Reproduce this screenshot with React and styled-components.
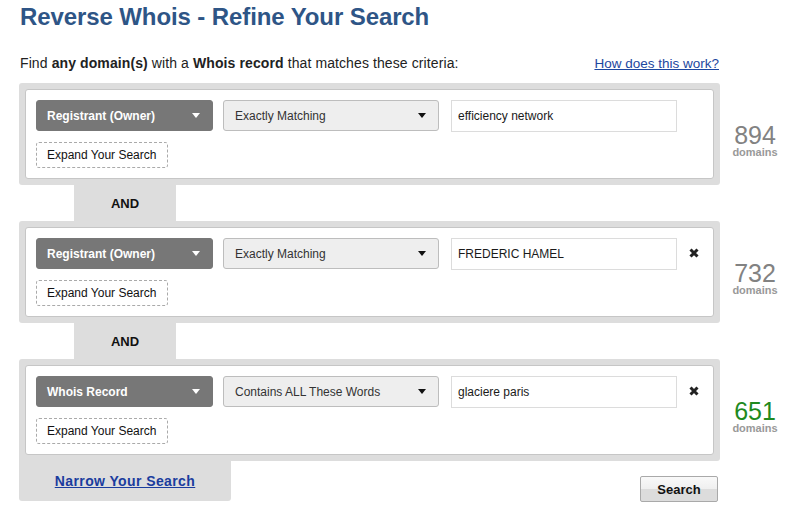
import React from "react";
import styled, { createGlobalStyle } from "styled-components";

const Global = createGlobalStyle`
  html, body { margin: 0; padding: 0; background: #fff; }
  body { font-family: "Liberation Sans", Arial, sans-serif; color: #222; }
  * { box-sizing: border-box; }
`;

const Page = styled.div`
  padding: 4px 0 0 19px;
  width: 790px;
`;

const Title = styled.h1`
  margin: 0 0 0 1px;
  font-size: 24px;
  line-height: 26px;
  letter-spacing: -0.1px;
  font-weight: bold;
  color: #2e5586;
`;

const IntroRow = styled.div`
  display: flex;
  justify-content: space-between;
  align-items: baseline;
  width: 699px;
  margin: 25px 0 11px 1px;
  font-size: 14px;
  line-height: 17px;
  letter-spacing: 0.1px;
  color: #222;
`;

const HelpLink = styled.a`
  color: #1d47a0;
  text-decoration: underline;
  letter-spacing: 0;
  font-size: 13.5px;
  cursor: pointer;
`;

const Row = styled.div`
  display: flex;
  align-items: flex-start;
`;

const Block = styled.div`
  width: 701px;
  display: flex;
  flex-direction: column;
`;

const Panel = styled.div`
  background: #dddddd;
  border-radius: ${(p) => (p.$flatBottomLeft ? "3px 3px 3px 0" : "3px")};
  padding: 6px;
  height: 102px;
`;

const Inner = styled.div`
  background: #fff;
  border: 1px solid #c6c6c6;
  border-radius: 3px;
  padding: 10px;
  height: 100%;
  display: flex;
  flex-direction: column;
  gap: 10px;
`;

const Fields = styled.div`
  display: flex;
  align-items: flex-start;
`;

const SelectBox = styled.div`
  display: flex;
  align-items: center;
  justify-content: space-between;
  height: 31px;
  width: ${(p) => p.$w}px;
  margin-right: ${(p) => p.$mr}px;
  padding: 0 12px 0 ${(p) => (p.$dark ? 10 : 11)}px;
  border-radius: 3px;
  font-size: 12px;
  background: ${(p) => (p.$dark ? "#777777" : "#eeeeee")};
  border: 1px solid ${(p) => (p.$dark ? "#777777" : "#bdbdbd")};
  color: ${(p) => (p.$dark ? "#fff" : "#333")};
  font-weight: ${(p) => (p.$dark ? "bold" : "normal")};
`;

const Arrow = styled.span`
  width: 0;
  height: 0;
  border-left: 4.5px solid transparent;
  border-right: 4.5px solid transparent;
  border-top: 5px solid ${(p) => (p.$dark ? "#fff" : "#111")};
`;

const TextInput = styled.div`
  width: 226px;
  height: 32px;
  border: 1px solid #dcdcdc;
  padding: 0 6px;
  display: flex;
  align-items: center;
  font-size: 12px;
  color: #1a1a1a;
`;

const RemoveIcon = styled.svg`
  margin: 10px 0 0 12px;
  flex: none;
`;

const ExpandButton = styled.div`
  width: 132px;
  height: 27px;
  border: 1px dashed #aaaaaa;
  border-radius: 3px;
  display: flex;
  align-items: center;
  padding-left: 10px;
  font-size: 12px;
  color: #111;
`;

const AndTab = styled.div`
  margin-left: 55px;
  width: 102px;
  height: 36px;
  background: #dddddd;
  display: flex;
  align-items: center;
  justify-content: center;
  font-size: 13px;
  font-weight: bold;
  color: #111;
`;

const Count = styled.div`
  width: 70px;
  padding-top: 41px;
  text-align: center;
`;

const CountNum = styled.div`
  font-size: 25px;
  line-height: 22px;
  color: ${(p) => (p.$green ? "#1f8a1f" : "#828282")};
`;

const CountLabel = styled.div`
  font-size: 11px;
  line-height: 12px;
  font-weight: bold;
  color: #999;
`;

const Footer = styled.div`
  width: 701px;
  display: flex;
  justify-content: space-between;
  align-items: flex-start;
`;

const NarrowTab = styled.div`
  width: 212px;
  height: 40px;
  background: #dddddd;
  border-radius: 0 0 3px 3px;
  display: flex;
  align-items: center;
  justify-content: center;
  padding-bottom: 1px;
`;

const NarrowLink = styled.a`
  font-size: 14px;
  font-weight: bold;
  color: #1a3c9e;
  text-decoration: underline;
  letter-spacing: 0.4px;
  cursor: pointer;
`;

const SearchButton = styled.button`
  margin: 15px 2px 0 0;
  width: 78px;
  height: 26px;
  border: 1px solid #a9a9a9;
  border-radius: 2px;
  background: linear-gradient(#f9f9f9 0%, #efefef 50%, #dcdcdc 50%, #dcdcdc 100%);
  font-family: "Liberation Sans", Arial, sans-serif;
  font-size: 13px;
  font-weight: bold;
  color: #111;
  padding: 0;
`;

const criteria = [
  { field: "Registrant (Owner)", match: "Exactly Matching", value: "efficiency network", count: "894", removable: false },
  { field: "Registrant (Owner)", match: "Exactly Matching", value: "FREDERIC HAMEL", count: "732", removable: true },
  { field: "Whois Record", match: "Contains ALL These Words", value: "glaciere paris", count: "651", removable: true, green: true },
];

const XIcon = () => (
  <RemoveIcon width="10" height="10" viewBox="0 0 10 10">
    <path d="M1.5 1.5 L8.5 8.5 M8.5 1.5 L1.5 8.5" stroke="#222" strokeWidth="3" strokeLinecap="butt" />
  </RemoveIcon>
);

export default function App() {
  return (
    <Page>
      <Global />
      <Title>Reverse Whois - Refine Your Search</Title>
      <IntroRow>
        <span>
          Find <b>any domain(s)</b> with a <b>Whois record</b> that matches these criteria:
        </span>
        <HelpLink>How does this work?</HelpLink>
      </IntroRow>
      {criteria.map((c, i) => (
        <Row key={i}>
          <Block>
            <Panel $flatBottomLeft={i === criteria.length - 1}>
              <Inner>
                <Fields>
                  <SelectBox $dark $w={177} $mr={10}>
                    <span>{c.field}</span>
                    <Arrow $dark />
                  </SelectBox>
                  <SelectBox $w={216} $mr={12}>
                    <span>{c.match}</span>
                    <Arrow />
                  </SelectBox>
                  <TextInput>{c.value}</TextInput>
                  {c.removable && <XIcon />}
                </Fields>
                <ExpandButton>Expand Your Search</ExpandButton>
              </Inner>
            </Panel>
            {i < criteria.length - 1 && <AndTab>AND</AndTab>}
          </Block>
          <Count>
            <CountNum $green={c.green}>{c.count}</CountNum>
            <CountLabel>domains</CountLabel>
          </Count>
        </Row>
      ))}
      <Footer>
        <NarrowTab>
          <NarrowLink>Narrow Your Search</NarrowLink>
        </NarrowTab>
        <SearchButton>Search</SearchButton>
      </Footer>
    </Page>
  );
}
